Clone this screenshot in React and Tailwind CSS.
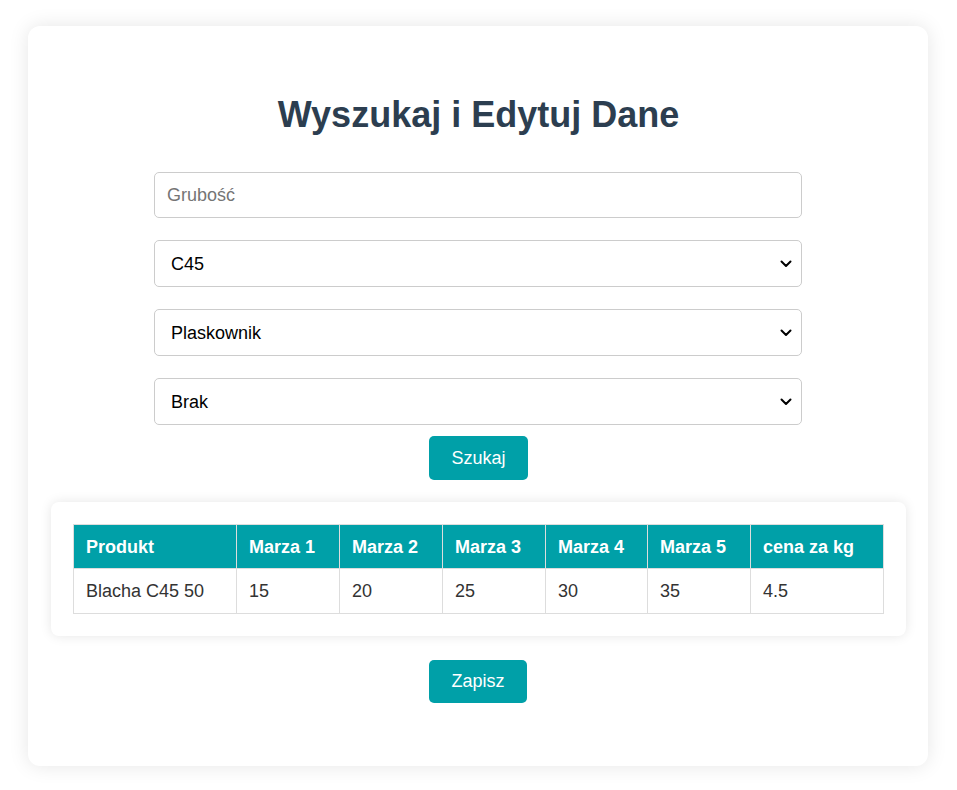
import React from "react";

function Chevron() {
  return (
    <svg width="12" height="8" viewBox="0 0 12 8" className="pointer-events-none absolute right-[9px] top-1/2 -translate-y-1/2">
      <path d="M1.5 1.5 L6 6 L10.5 1.5" fill="none" stroke="#000" strokeWidth="2" strokeLinecap="round" strokeLinejoin="round" />
    </svg>
  );
}

function Select({ value }) {
  return (
    <div className="relative h-[47px] w-full rounded-[5px] border border-[#cccccc] bg-white">
      <div className="flex h-full items-center pl-4 pt-[1px] text-[18px] text-black">{value}</div>
      <Chevron />
    </div>
  );
}

export default function App() {
  const headers = ["Produkt", "Marza 1", "Marza 2", "Marza 3", "Marza 4", "Marza 5", "cena za kg"];
  const row = ["Blacha C45 50", "15", "20", "25", "30", "35", "4.5"];
  const widths = ["w-[163px]", "w-[103px]", "w-[103px]", "w-[103px]", "w-[102px]", "w-[103px]", "w-[133px]"];
  return (
    <div className="min-h-[790px] bg-white pt-[26px] font-['Liberation_Sans',Arial,sans-serif]">
      <div className="ml-[28px] w-[900px] h-[740px] rounded-[12px] bg-white pt-[68px] pl-[23px] pr-[22px] shadow-[0_0_20px_rgba(0,0,0,0.1)]">
        <h1 className="text-center text-[36px] font-bold leading-[42px] text-[#2c3e50]">Wyszukaj i Edytuj Dane</h1>
        <div className="ml-[103px] mt-[36px] flex w-[648px] flex-col gap-[22px]">
          <div className="flex h-[46px] w-full items-center rounded-[5px] border border-[#cccccc] bg-white pl-3 text-[18px] text-[#757575]">Grubość</div>
          <Select value="C45" />
          <Select value="Plaskownik" />
          <Select value="Brak" />
        </div>
        <div className="mt-[11px] flex">
          <button className="ml-[378px] h-[44px] w-[99px] rounded-[5px] bg-[#00a0a8] text-[18px] text-white">Szukaj</button>
        </div>
        <div className="mt-[22px] rounded-[8px] bg-white p-[22px] shadow-[0_0_12px_rgba(0,0,0,0.1)]">
          <table className="w-[810px] table-fixed border-collapse text-left text-[18px]">
            <thead>
              <tr className="bg-[#00a0a8] text-white">
                {headers.map((h, i) => (
                  <th key={h} className={`${widths[i]} h-[44px] border border-[#dddddd] px-3 font-bold leading-none`}>{h}</th>
                ))}
              </tr>
            </thead>
            <tbody>
              <tr className="text-[#333333]">
                {row.map((c, i) => (
                  <td key={i} className="h-[45px] border border-[#dddddd] px-3 leading-none">{c}</td>
                ))}
              </tr>
            </tbody>
          </table>
        </div>
        <div className="mt-[24px] flex">
          <button className="ml-[378px] h-[43px] w-[98px] rounded-[5px] bg-[#00a0a8] text-[18px] text-white">Zapisz</button>
        </div>
      </div>
    </div>
  );
}
